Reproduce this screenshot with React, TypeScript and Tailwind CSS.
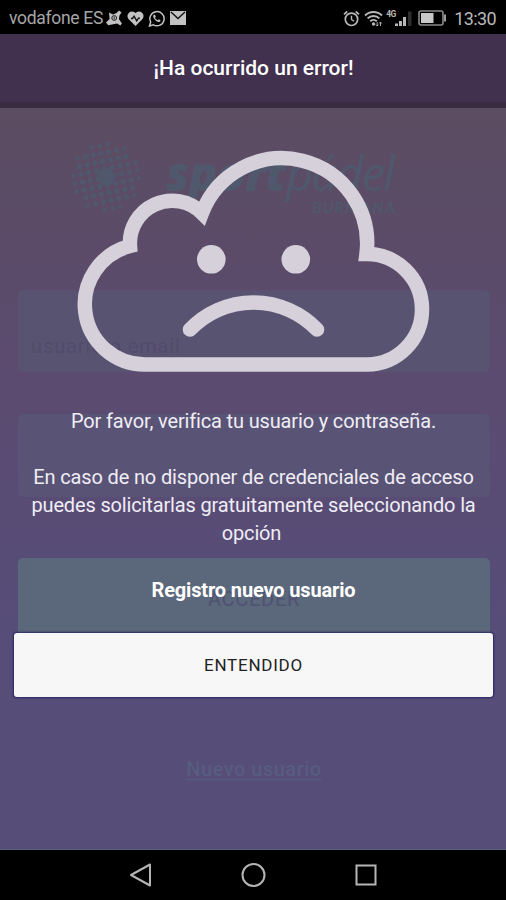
import type { ReactNode } from "react";

function StatusBar() {
  return (
    <div className="flex h-[34px] items-center bg-black pt-[2px] pr-[10px] pl-[9px] text-[17.5px] text-[#a6a6a6]">
      <span className="tracking-[-0.3px]">vodafone ES</span>
      <div className="ml-[3px] flex items-center gap-[4.500px] text-[#c2c2c2]">
        <svg width="16" height="16" viewBox="0 0 16 16" fill="currentColor">
          <path d="M3 2.500l4 2L10.500 3l2.500-2.500 2.500 2L13.500 5.500l-.6 3.500 3 4.500-1.600 2-3.200-2-8.900 1.700L0 12.500l3.600-3.500z" />
          <circle cx="8.200" cy="8" r="2.400" fill="none" stroke="#222" strokeWidth="1" />
          <path d="M8.200 6.500v3" stroke="#222" strokeWidth="1" />
        </svg>
        <svg width="17" height="15" viewBox="0 0 16 15">
          <path d="M8 15L1.2 8.2A4.3 4.3 0 0 1 8 1.9a4.3 4.3 0 0 1 6.8 6.3z" fill="currentColor" />
          <path d="M3.500 7.500H5l1.600-2.200 2.600 4.600L11 7.200h1.500" fill="none" stroke="#111" strokeWidth="1.300" />
        </svg>
        <svg width="17" height="17" viewBox="0 0 16 17" fill="none">
          <path d="M1 16l1.200-4A7.100 7.100 0 1 1 5 14.900z" stroke="currentColor" strokeWidth="1.500" />
          <path
            d="M5.300 4.700c-1 .9-.8 2.500.6 4.400 1.600 2.100 3.600 3.300 5 2.800 1-.4 1.300-1.100 1-1.600l-1.600-1-1.200.9c-1-.3-2.200-1.500-2.600-2.500l.8-1-.8-2z"
            fill="currentColor"
          />
        </svg>
        <svg width="16" height="14" viewBox="0 0 16 14">
          <path d="M0 0h16v14H0z" fill="currentColor" />
          <path d="M1 1l7 6.500L15 1" fill="none" stroke="#111" strokeWidth="1.400" />
        </svg>
      </div>

      <div className="ml-auto flex items-center text-[#b8b8b8]">
        <svg width="17" height="17" viewBox="0 0 17 17" fill="none" stroke="currentColor">
          <circle cx="8.500" cy="9.300" r="6.200" strokeWidth="1.700" />
          <path d="M1 4.400l3.200-2.900M16 4.400l-3.200-2.900" strokeWidth="1.700" />
          <path d="M8.500 5.800v3.700l2.500 1.800" strokeWidth="1.400" />
        </svg>
        <svg className="ml-[4px]" width="19" height="17" viewBox="0 0 19 17" fill="none" stroke="currentColor">
          <path
            d="M1 5.500a12 12 0 0 1 17 0M3.600 8.400a8.300 8.300 0 0 1 11.800 0M6.200 11.300a4.700 4.700 0 0 1 6.600 0"
            strokeWidth="1.900"
          />
          <circle cx="9.500" cy="14" r="1.700" fill="currentColor" stroke="none" />
          <path
            d="M13.200 12v4M11.800 14.500l1.400 1.500 1.400-1.500M16.500 16v-4M15.200 13.500l1.300-1.500 1.300 1.500"
            strokeWidth=".9"
          />
        </svg>
        <div className="relative ml-[3px] h-[17px] w-[26px]">
          <span className="absolute top-0 left-0 text-[8.500px] leading-[8px] font-bold tracking-[-0.5px]">4G</span>
          <svg width="26" height="17" viewBox="0 0 26 17" fill="currentColor">
            <path d="M9 13.500h3V16H9zM13 11h3v5h-3zM17 7h3v9h-3z" />
            <path d="M22 1.500h3.500V16H22z" fill="#2e2e2e" />
          </svg>
        </div>
        <svg className="ml-[6px]" width="29" height="16" viewBox="0 0 29 16">
          <rect x="1" y="1" width="24" height="14" rx="2" fill="none" stroke="#8a8a8a" strokeWidth="1.600" />
          <path d="M3 3h12.500v10H3z" fill="#c8c8c8" />
          <path d="M26 4.500h2v7h-2z" fill="#9a9a9a" />
        </svg>
        <span className="ml-[7px] text-[18px] tracking-[-0.6px]">13:30</span>
      </div>
    </div>
  );
}

// Halftone ball, rows rotated slightly
function BallLogo() {
  const dots: ReactNode[] = [];
  for (let i = -4; i <= 4; i++) {
    for (let j = -4; j <= 4; j++) {
      const d = Math.hypot(i, j);
      if (d > 4.3 || d < 1) continue;
      dots.push(<circle key={`${i},${j}`} cx={i * 8} cy={j * 8} r={d > 3.8 ? 2.2 : 2.6} />);
    }
  }
  return (
    <svg width="72" height="72" viewBox="-36 -36 72 72" fill="currentColor">
      <g transform="rotate(-12)">
        {dots}
        <circle r="8.500" />
      </g>
    </svg>
  );
}

function LoginScreen() {
  return (
    <div className="flex h-full flex-col bg-[linear-gradient(180deg,#5c4d62_9%,#5b4b69_27%,#5c4b70_43%,#584c75_58%,#564d79_75%,#564d79_100%)] pr-[16px] pl-[18px]">
      <div className="mt-[107px] flex h-[78px] pl-[52px] text-[#50586d]">
        <BallLogo />
        <div className="ml-[24px] w-[230px] pt-[7px]">
          <div className="flex items-baseline font-['Open_Sans',sans-serif] text-[47px] leading-[50px] italic">
            <span className="font-extrabold tracking-[-0.5px]">sport</span>
            <span className="tracking-[-1.800px]">pádel</span>
          </div>
          <div className="-mt-[1px] text-right font-[Lato,sans-serif] text-[16px] leading-[20px] font-bold tracking-[0.9px] italic">
            BURRIANA
          </div>
        </div>
      </div>
      <div className="mt-[71px] flex h-[82px] items-end rounded-[5px] bg-[#595372] px-[13px] pb-[14px] text-[20px] leading-[24px] tracking-[0.9px] text-[#514c6c]">
        usuario o email
      </div>
      <div className="mt-[42px] h-[83px] rounded-[5px] bg-[#595375]" />
      <div className="mt-[61px] flex h-[82px] items-center justify-center rounded-[5px] bg-[#5b677a] text-[20px] tracking-[0.7px] text-[#4f5273]">
        ACCEDER
      </div>
      <div className="mt-[116px] text-center text-[20px] leading-[26px] font-medium tracking-[0.5px] text-[#575c80] underline decoration-1 underline-offset-3">
        Nuevo usuario
      </div>
      <div className="-mr-[16px] -ml-[18px] mt-auto h-[1px] bg-[#56617b]" />
    </div>
  );
}

function SadCloud() {
  return (
    <svg
      className="mx-auto"
      width="356"
      height="224"
      viewBox="75 150 356 224"
      fill="none"
      stroke="#d5d0da"
      strokeWidth="14.500"
    >
      <path d="M145 364.500A60.200 60.200 0 0 1 130 246A42.300 42.300 0 0 1 202 213A85.400 85.400 0 0 1 366.500 254A55.250 55.250 0 0 1 367 364.500Z" />
      <path d="M190 329.500A88 88 0 0 1 317 329.500" strokeLinecap="round" />
      <circle cx="211.300" cy="259.300" r="14.300" fill="#d5d0da" stroke="none" />
      <circle cx="295.800" cy="259.300" r="14.300" fill="#d5d0da" stroke="none" />
    </svg>
  );
}

function ErrorDialog() {
  return (
    <div role="alertdialog" className="absolute inset-0 flex flex-col">
      <h1 className="flex h-[74px] items-center justify-center border-b-[6px] border-[#3a2c40] bg-[#41304e] pt-[2px] pl-[1px] text-[21px] font-medium text-white">
        ¡Ha ocurrido un error!
      </h1>
      <div className="mt-[42px]">
        <SadCloud />
      </div>
      <div className="mt-[33px] pr-[23px] pl-[24px] text-center text-[20px] leading-[28px] tracking-[-0.15px] text-[#f0edf5]">
        <p>Por favor, verifica tu usuario y contraseña.</p>
        <p className="mt-[28px]">
          En caso de no disponer de credenciales de acceso
          <br />
          puedes solicitarlas gratuitamente seleccionando la
          <br />
          <span className="mr-[4px]">opción</span>
        </p>
        <p className="mt-[29px] font-bold text-white">Registro nuevo usuario</p>
      </div>
      <button className="mr-[13px] ml-[14px] mt-[29px] h-[64px] rounded-[3px] bg-[#f7f7f7] pt-[2px] text-[17px] tracking-[0.750px] text-[#222] shadow-[0_0_2px_1px_#2b2765]">
        ENTENDIDO
      </button>
    </div>
  );
}

function NavBar() {
  return (
    <div className="flex h-[50px] items-center justify-center gap-[88px] bg-black text-[#b5b5b5]">
      <svg width="24" height="26" viewBox="0 0 24 26" fill="none" stroke="currentColor" strokeWidth="2">
        <path d="M22 2.500v21L3 13z" strokeLinejoin="round" />
      </svg>
      <svg width="26" height="26" viewBox="0 0 26 26" fill="none" stroke="currentColor" strokeWidth="2">
        <circle cx="13.500" cy="13" r="11" />
      </svg>
      <svg width="24" height="26" viewBox="0 0 24 26" fill="none" stroke="currentColor" strokeWidth="2">
        <path d="M2.500 3.500h19v19h-19z" />
      </svg>
    </div>
  );
}

export default function App() {
  return (
    <div className="flex h-[900px] w-[506px] flex-col overflow-hidden font-[Roboto,sans-serif]">
      <StatusBar />
      <div className="relative h-[816px]">
        <LoginScreen />
        <ErrorDialog />
      </div>
      <NavBar />
    </div>
  );
}
